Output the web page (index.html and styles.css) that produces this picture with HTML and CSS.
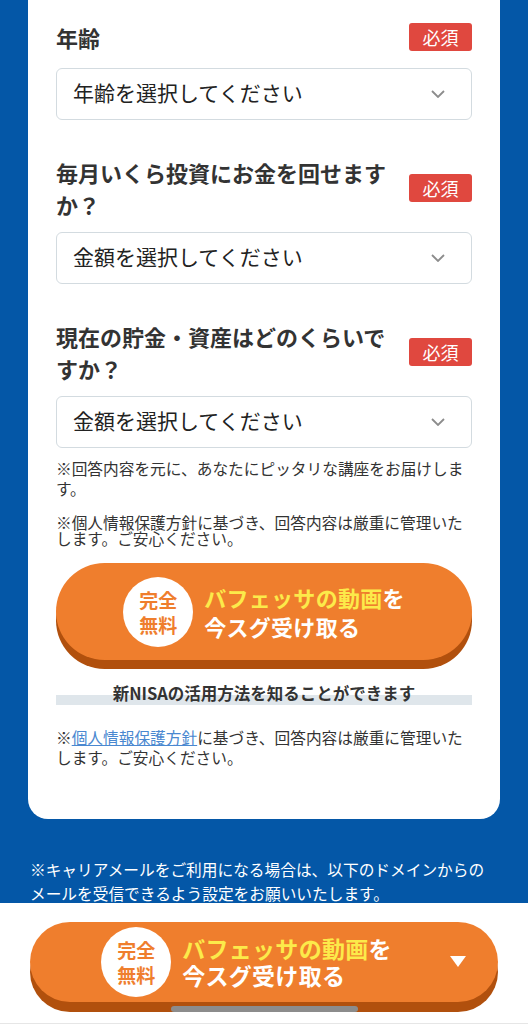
FILE: index.html
```html
<!DOCTYPE html>
<html lang="ja">

<head>
    <meta charset="UTF-8">
    <meta name="viewport" content="width=device-width, initial-scale=1.0">
    <title>無料動画お申し込み</title>
    <link rel="stylesheet" href="styles.css">
</head>

<body>
    <main class="form-card">
        <div class="field">
            <div class="field-head">
                <label class="field-label" for="age">年齢</label>
                <span class="badge">必須</span>
            </div>
            <div class="select-box">
                <select class="select" id="age">
                    <option>年齢を選択してください</option>
                </select>
                <svg class="chevron" width="14" height="8" viewBox="0 0 14 8">
                    <polyline points="1,1 7,7 13,1" fill="none" stroke="#8c8c8c" stroke-width="1.8" />
                </svg>
            </div>
        </div>

        <div class="field">
            <div class="field-head">
                <label class="field-label" for="monthly">毎月いくら投資にお金を回せますか？</label>
                <span class="badge">必須</span>
            </div>
            <div class="select-box">
                <select class="select" id="monthly">
                    <option>金額を選択してください</option>
                </select>
                <svg class="chevron" width="14" height="8" viewBox="0 0 14 8">
                    <polyline points="1,1 7,7 13,1" fill="none" stroke="#8c8c8c" stroke-width="1.8" />
                </svg>
            </div>
        </div>

        <div class="field">
            <div class="field-head">
                <label class="field-label" for="assets">現在の貯金・資産はどのくらいですか？</label>
                <span class="badge">必須</span>
            </div>
            <div class="select-box">
                <select class="select" id="assets">
                    <option>金額を選択してください</option>
                </select>
                <svg class="chevron" width="14" height="8" viewBox="0 0 14 8">
                    <polyline points="1,1 7,7 13,1" fill="none" stroke="#8c8c8c" stroke-width="1.8" />
                </svg>
            </div>
        </div>

        <p class="note note-first">※回答内容を元に、あなたにピッタリな講座をお届けします。</p>
        <p class="note note-tight">※個人情報保護方針に基づき、回答内容は厳重に管理いたします。ご安心ください。</p>

        <button class="cta">
            <span class="cta-free">完全<br>無料</span>
            <span class="cta-text"><span class="cta-hl">バフェッサの動画</span>を<br>今スグ受け取る</span>
        </button>

        <p class="cta-sub">新NISAの活用方法を知ることができます</p>

        <p class="note note-last">※<a href="#">個人情報保護方針</a>に基づき、回答内容は厳重に管理いたします。ご安心ください。</p>
    </main>

    <p class="mail-note">※キャリアメールをご利用になる場合は、以下のドメインからのメールを受信できるよう設定をお願いいたします。</p>

    <div class="sticky-bar">
        <button class="cta cta-bottom">
            <span class="cta-free">完全<br>無料</span>
            <span class="cta-text"><span class="cta-hl">バフェッサの動画</span>を<br>今スグ受け取る</span>
            <span class="cta-arrow"></span>
        </button>
        <span class="home-bar"></span>
    </div>
</body>

</html>
```

FILE: styles.css
```css
* {
    margin: 0;
    padding: 0;
    box-sizing: border-box;
}

body {
    background-color: #0457a7;
    font-family: "Noto Sans CJK JP", "Noto Sans", sans-serif;
    color: #333;
    padding-bottom: 110px;
}

.form-card {
    background-color: #fff;
    margin: 0 28px;
    padding: 18px 28px 51px;
    border-radius: 0 0 20px 20px;
}

.field + .field {
    margin-top: 36px;
}

.field-head {
    display: flex;
    align-items: center;
    gap: 16px;
    min-height: 38px;
    margin-bottom: 12px;
}

.field-label {
    flex: 1;
    font-size: 22px;
    font-weight: bold;
    line-height: 32px;
    color: #333;
}

.badge {
    width: 63px;
    height: 28px;
    flex-shrink: 0;
    display: flex;
    align-items: center;
    justify-content: center;
    background-color: #e0483f;
    color: #fff;
    font-size: 18px;
    border-radius: 3px;
}

.select-box {
    position: relative;
}

.select {
    appearance: none;
    -webkit-appearance: none;
    display: block;
    width: 100%;
    height: 52px;
    padding: 0 40px 5px 16px;
    border: 1px solid #d3dbe0;
    border-radius: 6px;
    background-color: #fff;
    font-family: inherit;
    font-size: 21px;
    color: #222;
}

.chevron {
    position: absolute;
    right: 27px;
    top: 22px;
    pointer-events: none;
}

.note {
    font-size: 15.7px;
    line-height: 20px;
    color: #333;
}

.note-first {
    margin-top: 11px;
}

.note-tight {
    margin-top: 16px;
    line-height: 15.5px;
}

.note-last {
    margin-top: 23px;
}

.note a {
    color: #4a88d0;
}

.cta {
    display: flex;
    align-items: center;
    justify-content: center;
    gap: 11px;
    width: 100%;
    height: 97px;
    margin-top: 17px;
    border: none;
    border-radius: 49px;
    background-color: #ef7e2d;
    box-shadow: 0 9px 0 #b1500d;
    font-family: inherit;
    cursor: pointer;
}

.cta-free {
    width: 70px;
    height: 70px;
    flex-shrink: 0;
    display: flex;
    align-items: center;
    justify-content: center;
    border-radius: 50%;
    background-color: #fff;
    color: #ef7e2d;
    font-size: 19px;
    font-weight: bold;
    line-height: 25px;
}

.cta-text {
    text-align: left;
    color: #fff;
    font-size: 22px;
    font-weight: bold;
    line-height: 29px;
    letter-spacing: 0.3px;
}

.cta-hl {
    color: #fcea4a;
}

.cta-sub {
    margin-top: 21px;
    text-align: center;
    font-size: 16.5px;
    font-weight: bold;
    line-height: 24px;
    color: #333;
    background: linear-gradient(transparent 60%, #dfe6eb 60%);
}

.mail-note {
    margin-top: 39px;
    padding: 0 30px;
    color: #fff;
    font-size: 15.7px;
    line-height: 23.5px;
}

.sticky-bar {
    position: fixed;
    left: 0;
    right: 0;
    bottom: 0;
    height: 121px;
    padding: 19px 30px 0;
    background-color: #fff;
    border-bottom: 1px solid #e6e6e6;
}

.cta-bottom {
    position: relative;
    height: 80px;
    margin-top: 0;
    border-radius: 40px;
    box-shadow: 0 10px 0 #b1500d;
    padding-right: 35px;
}

.cta-bottom .cta-text {
    font-size: 23px;
    line-height: 27px;
}

.cta-arrow {
    position: absolute;
    right: 32px;
    top: 34px;
    border-left: 8px solid transparent;
    border-right: 8px solid transparent;
    border-top: 11px solid #fff;
}

.home-bar {
    position: absolute;
    left: 50%;
    bottom: 11px;
    width: 187px;
    height: 6px;
    margin-left: -93px;
    border-radius: 3px;
    background-color: #8c8c8c;
}
```
